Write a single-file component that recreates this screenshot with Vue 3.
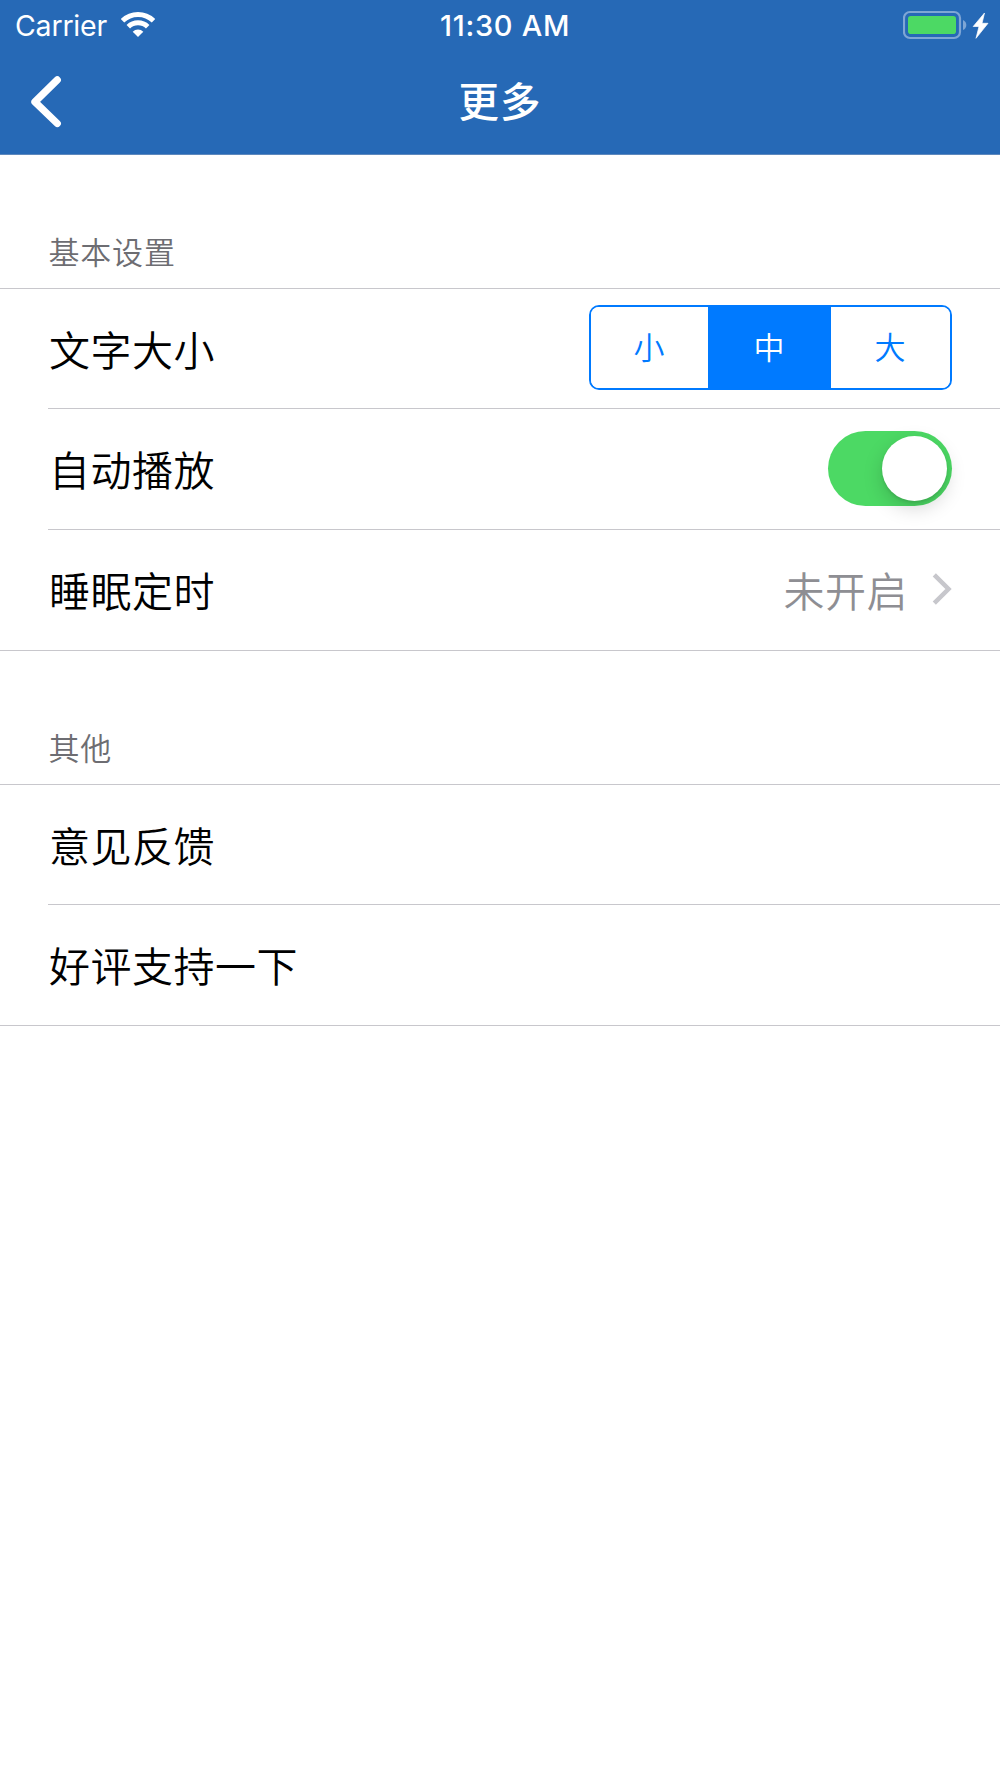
<script setup>
import { ref } from 'vue'

const sizes = ['小', '中', '大']
const size = ref('中')
const autoplay = ref(true)
</script>

<template>
  <div class="screen">
    <header class="top">
      <div class="status">
        <div class="network">
          <span class="carrier">Carrier</span>
          <svg class="wifi" width="34" height="26" viewBox="0 0 34 26">
            <path class="arc" d="M1.5 8.8 A22.3 22.3 0 0 1 32.5 8.8" />
            <path class="arc" d="M7.3 14.700 A14 14 0 0 1 26.7 14.700" />
            <path class="dot" d="M17 25 L11.7 19.7 A7.7 7.7 0 0 1 22.3 19.7 Z" />
          </svg>
        </div>
        <span class="time">11:30 AM</span>
        <div class="power">
          <svg width="88" height="30" viewBox="0 0 88 30">
            <rect class="shell" x="1" y="2" width="56" height="26" rx="6" />
            <rect class="charge" x="5" y="6" width="48" height="18" rx="2.8" />
            <path class="cap" d="M60 10 Q63.3 11.5 63.3 15 Q63.3 18.500 60 20 Z" />
            <path class="bolt" d="M81.500 3 L70.200 16.500 L76 16.500 L73 28.300 L85 13.300 L79 13.300 Z" />
          </svg>
        </div>
      </div>
      <nav class="nav">
        <svg class="back" width="32" height="52" viewBox="0 0 32 52">
          <path d="M27.300 3.900 L4.900 25.900 L27.300 47.500" />
        </svg>
        <h1 class="title">更多</h1>
      </nav>
    </header>

    <h2 class="caption">基本设置</h2>
    <section class="group">
      <div class="row">
        <span class="label">文字大小</span>
        <div class="segments">
          <button
            v-for="s in sizes"
            :key="s"
            class="segment"
            :class="{ active: s === size }"
            @click="size = s"
          >{{ s }}</button>
        </div>
      </div>
      <div class="row">
        <span class="label">自动播放</span>
        <button class="toggle" :class="{ on: autoplay }" @click="autoplay = !autoplay">
          <span class="knob"></span>
        </button>
      </div>
      <div class="row">
        <span class="label">睡眠定时</span>
        <span class="value">未开启</span>
        <svg class="chevron" width="20" height="34" viewBox="0 0 20 34">
          <path d="M2.300 2.800 L16.500 17 L2.300 31.200" />
        </svg>
      </div>
    </section>

    <h2 class="caption">其他</h2>
    <section class="group">
      <div class="row"><span class="label">意见反馈</span></div>
      <div class="row"><span class="label">好评支持一下</span></div>
    </section>
  </div>
</template>

<style>
body {
  margin: 0;
  background: #fff;
}
</style>

<style scoped>
.screen {
  width: 1000px;
  height: 1778px;
  background: #fff;
  color: #000;
  font-family: Inter, "Noto Sans CJK SC", sans-serif;
  overflow: hidden;
}
.top {
  box-sizing: border-box;
  height: 155px;
  background: #2669b6;
  border-bottom: 1px solid #5d88bd;
  color: #fff;
}
.status {
  display: grid;
  grid-template-columns: 1fr auto 1fr;
  align-items: center;
  height: 50px;
  padding: 1px 9px 0 15px;
  box-sizing: border-box;
  font-size: 28.5px;
  line-height: 49px;
}
.network {
  display: flex;
  align-items: center;
}
.carrier {
  width: 106px;
  letter-spacing: -0.2px;
}
.wifi {
  margin-bottom: 2px;
}
.wifi .arc {
  fill: none;
  stroke: #fff;
  stroke-width: 5;
}
.wifi .dot {
  fill: #fff;
}
.time {
  padding-left: 4px;
  font-size: 29px;
  font-weight: 500;
  letter-spacing: 0.7px;
}
.power {
  display: flex;
  justify-content: flex-end;
  margin-bottom: 1px;
}
.shell {
  fill: none;
  stroke: #7ea6d5;
  stroke-width: 2.2;
}
.charge {
  fill: #4cd964;
}
.cap {
  fill: #7ea6d5;
}
.bolt {
  fill: #fff;
  stroke: #fff;
  stroke-width: 0.7;
}
.nav {
  display: grid;
  grid-template-columns: 1fr auto 1fr;
  align-items: center;
  height: 104px;
  padding: 0 28px;
}
.back {
  margin-left: 2px;
}
.back path {
  fill: none;
  stroke: #fff;
  stroke-width: 7.2;
  stroke-linecap: round;
  stroke-linejoin: round;
}
.title {
  margin: 0;
  padding-top: 2px;
  font-size: 40.5px;
  font-weight: 500;
  letter-spacing: 1px;
  line-height: 60px;
}
.caption {
  box-sizing: border-box;
  height: 133px;
  margin: 0;
  padding: 74px 0 0 48.5px;
  color: #6d6d72;
  font-size: 31px;
  font-weight: 350;
  letter-spacing: 0.8px;
  line-height: 48px;
}
.group {
  border-top: 1px solid #c8c7cc;
  border-bottom: 1px solid #c8c7cc;
}
.row {
  box-sizing: border-box;
  display: flex;
  align-items: center;
  height: 120px;
  margin-left: 48px;
  padding-right: 48px;
}
.row + .row {
  height: 121px;
  border-top: 1px solid #c8c7cc;
}
.row:first-child {
  height: 119px;
}
.label {
  flex: 1;
  padding: 4px 0 0 1px;
  font-size: 41px;
  font-weight: 350;
  letter-spacing: 0.5px;
  line-height: 60px;
}
.segments {
  box-sizing: border-box;
  display: flex;
  width: 363px;
  height: 85px;
  margin-bottom: 2px;
  border: 2.5px solid #007aff;
  border-radius: 10px;
  overflow: hidden;
}
.segment {
  flex: 0 0 117px;
  padding: 0 1px 3px 0;
  border: 0;
  background: #fff;
  color: #007aff;
  font: 350 31px/78px "Noto Sans CJK SC", sans-serif;
}
.segment.active {
  flex: 0 0 123px;
  background: #007aff;
  color: #fff;
}
.segment:last-child {
  flex: 1;
}
.toggle {
  box-sizing: border-box;
  display: flex;
  width: 124px;
  height: 75px;
  margin-bottom: 1px;
  padding: 5px;
  border: 0;
  border-radius: 38px;
  background: #e5e5ea;
}
.toggle.on {
  justify-content: flex-end;
  background: #4cd964;
}
.knob {
  width: 65px;
  height: 65px;
  border-radius: 50%;
  background: #fff;
  box-shadow: 0 7px 19px rgba(0, 0, 0, 0.17), 0 2px 3px rgba(0, 0, 0, 0.1);
}
.value {
  margin-right: 24px;
  padding-top: 4px;
  color: #8e8e93;
  font-size: 41px;
  font-weight: 350;
  letter-spacing: 0.5px;
  line-height: 60px;
}
.chevron {
  margin-bottom: 2px;
}
.chevron path {
  fill: none;
  stroke: #c7c7cc;
  stroke-width: 4.5;
}
</style>
